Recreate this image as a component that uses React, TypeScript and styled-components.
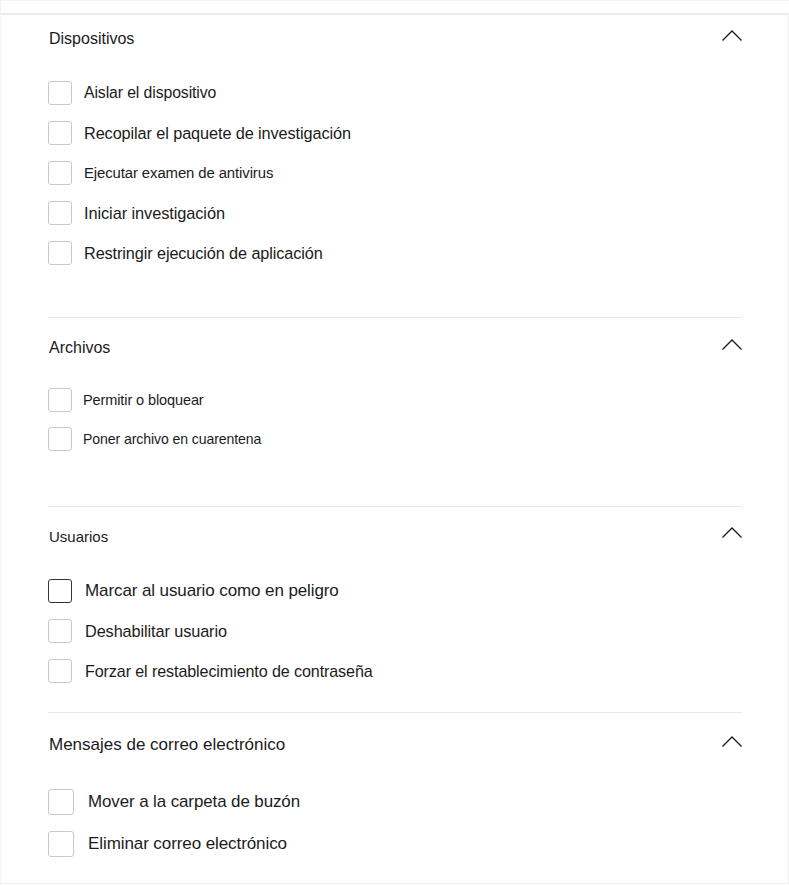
import { FC } from 'react';
import styled, { createGlobalStyle } from 'styled-components';

const GlobalStyle = createGlobalStyle`
    html, body {
        margin: 0;
        padding: 0;
        background: #ffffff;
    }
    body {
        font-family: 'Liberation Sans', Arial, sans-serif;
        color: #1b1b1b;
    }
`;

const Frame = styled.div`
    width: 789px;
    height: 885px;
    box-sizing: border-box;
    border-top: 1px solid #f3f3f3;
    border-left: 1px solid #f3f3f3;
    padding-top: 12px;
    overflow: hidden;
`;

const Panel = styled.div`
    width: 788px;
    height: 871px;
    box-sizing: border-box;
    border-top: 2px solid #ececec;
    border-right: 1px solid #efefef;
    border-bottom: 1px solid #efefef;
    padding: 0 46px 0 47px;
`;

const Section = styled.section<{ $bottom: number; $top: number }>`
    padding-top: ${(p) => p.$top}px;
    padding-bottom: ${(p) => p.$bottom}px;
    & + & {
        border-top: 1px solid #e8e8e8;
    }
`;

const Header = styled.div<{ $size: number; $space: number }>`
    display: flex;
    align-items: center;
    justify-content: space-between;
    height: 24px;
    padding-left: 1px;
    font-size: ${(p) => p.$size}px;
    margin-bottom: ${(p) => p.$space}px;
`;

const Chevron = styled.svg`
    width: 20px;
    height: 11px;
    display: block;
    margin-top: -7px;
`;

const List = styled.div`
    display: flex;
    flex-direction: column;
`;

const Row = styled.label<{ $height: number }>`
    display: flex;
    align-items: center;
    height: ${(p) => p.$height}px;
    cursor: pointer;
`;

const Box = styled.span<{ $size: number; $active?: boolean }>`
    width: ${(p) => p.$size}px;
    height: ${(p) => p.$size}px;
    box-sizing: border-box;
    border: 1px solid ${(p) => (p.$active ? '#333333' : '#c8c8c8')};
    border-radius: 3px;
    flex-shrink: 0;
    background: #ffffff;
`;

const Label = styled.span<{ $size: number; $gap: number }>`
    margin-left: ${(p) => p.$gap}px;
    font-size: ${(p) => p.$size}px;
    letter-spacing: -0.1px;
`;

interface IAction {
    label: string;
    size?: number;
    active?: boolean;
}

interface IGroup {
    title: string;
    titleSize: number;
    top: number;
    space: number;
    bottom: number;
    box: number;
    gap: number;
    rowHeight: number;
    actions: IAction[];
}

const groups: IGroup[] = [
    {
        title: 'Dispositivos',
        titleSize: 16,
        top: 12,
        space: 22,
        bottom: 44,
        box: 24,
        gap: 12,
        rowHeight: 40,
        actions: [
            { label: 'Aislar el dispositivo', size: 15.8 },
            { label: 'Recopilar el paquete de investigación', size: 16.3 },
            { label: 'Ejecutar examen de antivirus', size: 14.9 },
            { label: 'Iniciar investigación', size: 16.4 },
            { label: 'Restringir ejecución de aplicación', size: 16.25 },
        ],
    },
    {
        title: 'Archivos',
        titleSize: 16,
        top: 18,
        space: 20,
        bottom: 48,
        box: 24,
        gap: 11,
        rowHeight: 39,
        actions: [
            { label: 'Permitir o bloquear', size: 14.5 },
            { label: 'Poner archivo en cuarentena', size: 14.1 },
        ],
    },
    {
        title: 'Usuarios',
        titleSize: 15,
        top: 17,
        space: 23,
        bottom: 21,
        box: 24,
        gap: 13,
        rowHeight: 40,
        actions: [
            { label: 'Marcar al usuario como en peligro', size: 17, active: true },
            { label: 'Deshabilitar usuario', size: 16.3 },
            { label: 'Forzar el restablecimiento de contraseña', size: 16.1 },
        ],
    },
    {
        title: 'Mensajes de correo electrónico',
        titleSize: 17,
        top: 20,
        space: 24,
        bottom: 20,
        box: 26,
        gap: 14,
        rowHeight: 42,
        actions: [
            { label: 'Mover a la carpeta de buzón', size: 16.95 },
            { label: 'Eliminar correo electrónico', size: 17.05 },
        ],
    },
];

const ChevronUp: FC = () => (
    <Chevron viewBox="0 0 20 11" fill="none">
        <path d="M0.5 10.5 L10 1 L19.5 10.5" stroke="#1b1b1b" strokeWidth="1.3" />
    </Chevron>
);

const Group: FC<IGroup> = ({ title, titleSize, top, space, bottom, box, gap, rowHeight, actions }) => (
    <Section $top={top} $bottom={bottom}>
        <Header $size={titleSize} $space={space}>
            <span>{title}</span>
            <ChevronUp />
        </Header>
        <List>
            {actions.map((action) => (
                <Row key={action.label} $height={rowHeight}>
                    <Box $size={box} $active={action.active} />
                    <Label $size={action.size ?? 16} $gap={gap}>
                        {action.label}
                    </Label>
                </Row>
            ))}
        </List>
    </Section>
);

const App: FC = () => (
    <>
        <GlobalStyle />
        <Frame>
            <Panel>
                {groups.map((group) => (
                    <Group key={group.title} {...group} />
                ))}
            </Panel>
        </Frame>
    </>
);

export default App;
